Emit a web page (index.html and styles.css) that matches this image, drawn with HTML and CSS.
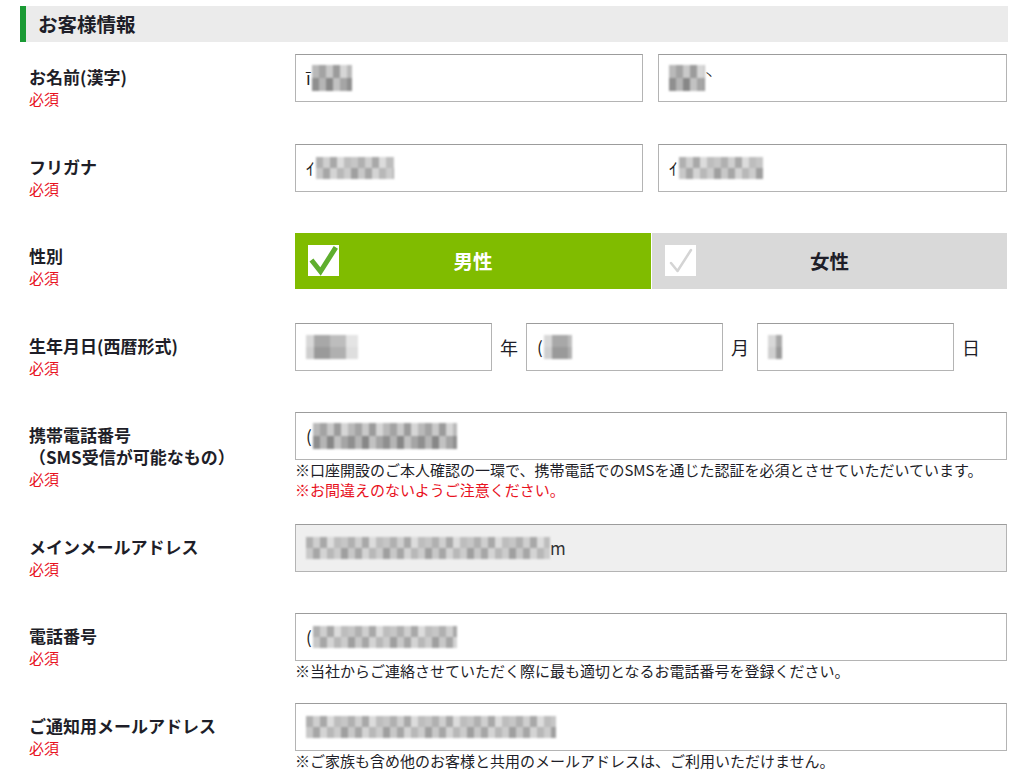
FILE: index.html
```html
<!DOCTYPE html>
<html lang="ja">
<head>
<meta charset="utf-8">
<title>お客様情報</title>
<link rel="stylesheet" href="styles.css">
</head>
<body>
<div class="page">
  <h2 class="section-title">お客様情報</h2>

  <div class="row">
    <div class="label"><div class="name">お名前(漢字)</div><div class="req">必須</div></div>
    <div class="field">
      <div class="pair">
        <div class="input"><span class="lead">ī</span><span class="mosaic w42"></span></div>
        <div class="input"><span class="mosaic w36"></span><span class="tick">丶</span></div>
      </div>
    </div>
  </div>

  <div class="row">
    <div class="label"><div class="name">フリガナ</div><div class="req">必須</div></div>
    <div class="field">
      <div class="pair">
        <div class="input"><span class="lead">ｲ</span><span class="mosaic w78 thin"></span></div>
        <div class="input"><span class="lead">ｲ</span><span class="mosaic w82 thin"></span></div>
      </div>
    </div>
  </div>

  <div class="row">
    <div class="label"><div class="name">性別</div><div class="req">必須</div></div>
    <div class="field">
      <div class="gender">
        <div class="gbtn on">
          <span class="cbox"><svg viewBox="0 0 31 31" width="31" height="31"><path d="M5 17 L12.5 26.5 L26.5 4.5" fill="none" stroke="#5fae2e" stroke-width="5" stroke-linecap="square" stroke-linejoin="miter"/></svg></span>
          <span class="gtext">男性</span>
        </div>
        <div class="gbtn off">
          <span class="cbox"><svg viewBox="0 0 31 31" width="31" height="31"><path d="M6 18 L12.5 26 L26 5" fill="none" stroke="#d4d4d4" stroke-width="2.5" stroke-linecap="round" stroke-linejoin="round"/></svg></span>
          <span class="gtext">女性</span>
        </div>
      </div>
    </div>
  </div>

  <div class="row">
    <div class="label"><div class="name">生年月日(西暦形式)</div><div class="req">必須</div></div>
    <div class="field">
      <div class="birth">
        <div class="input short"><span class="mosaic w52 soft"></span></div><span class="unit">年</span>
        <div class="input short"><span class="lead">(</span><span class="mosaic w28 soft"></span></div><span class="unit">月</span>
        <div class="input short"><span class="mosaic w14 soft"></span></div><span class="unit">日</span>
      </div>
    </div>
  </div>

  <div class="row">
    <div class="label"><div class="name">携帯電話番号</div><div class="name">（SMS受信が可能なもの）</div><div class="req">必須</div></div>
    <div class="field">
      <div class="input"><span class="lead">(</span><span class="mosaic w140"></span></div>
      <div class="notes">
        <p class="note">※口座開設のご本人確認の一環で、携帯電話でのSMSを通じた認証を必須とさせていただいています。</p>
        <p class="note red">※お間違えのないようご注意ください。</p>
      </div>
    </div>
  </div>

  <div class="row">
    <div class="label"><div class="name">メインメールアドレス</div><div class="req">必須</div></div>
    <div class="field">
      <div class="input disabled"><span class="mosaic w240 thin"></span><span class="tail">m</span></div>
    </div>
  </div>

  <div class="row">
    <div class="label"><div class="name">電話番号</div><div class="req">必須</div></div>
    <div class="field">
      <div class="input"><span class="lead">(</span><span class="mosaic w140 thin"></span></div>
      <div class="notes">
        <p class="note">※当社からご連絡させていただく際に最も適切となるお電話番号を登録ください。</p>
      </div>
    </div>
  </div>

  <div class="row">
    <div class="label"><div class="name">ご通知用メールアドレス</div><div class="req">必須</div></div>
    <div class="field">
      <div class="input"><span class="mosaic w250 thin"></span></div>
      <div class="notes">
        <p class="note">※ご家族も含め他のお客様と共用のメールアドレスは、ご利用いただけません。</p>
      </div>
    </div>
  </div>
</div>
</body>
</html>
```

FILE: styles.css
```css
* { box-sizing: border-box; }

html, body {
  margin: 0;
  padding: 0;
  background: #ffffff;
}

body {
  font-family: "Noto Sans CJK JP", "Noto Sans", "Liberation Sans", sans-serif;
  color: #1e1e28;
}

.page {
  width: 1024px;
  padding: 6px 16px 0 20px;
}

.section-title {
  margin: 0 0 12px 0;
  height: 36px;
  line-height: 36px;
  background: #ebebeb;
  border-left: 6px solid #1a9a34;
  padding-left: 12px;
  font-size: 19.5px;
  font-weight: 700;
  color: #1e1e28;
}

.row {
  display: flex;
  margin: 0 0 33.5px 0;
}

.label {
  width: 275px;
  flex: none;
  padding-left: 9px;
  padding-top: 12px;
}

.name {
  font-size: 17px;
  line-height: 22px;
  font-weight: 700;
  white-space: nowrap;
}

.req {
  font-size: 15px;
  line-height: 22px;
  color: #e8121e;
}

.field {
  width: 712px;
  flex: none;
}

.pair {
  display: grid;
  grid-template-columns: 348px 349px;
  gap: 15px;
}

.input {
  height: 48px;
  border: 1px solid #b4b4b4;
  border-top-color: #9c9c9c;
  background: #fff;
  display: flex;
  align-items: center;
  padding-left: 10px;
  font-size: 17px;
  color: #111;
}

.input.disabled {
  background: #efefef;
}

.input.short {
  width: 197px;
}

.lead {
  font-size: 17px;
  line-height: 20px;
  color: #222;
  margin-right: 1px;
}

.tick {
  font-size: 12px;
  margin-left: -2px;
  margin-bottom: 8px;
  color: #222;
}

.tail {
  font-size: 17px;
  color: #333;
}

.mosaic {
  display: inline-block;
  height: 26px;
  background:
    repeating-linear-gradient(90deg, #b9b9b9 0 7px, #a3a3a3 7px 14px, #c9c9c9 14px 21px, #9b9b9b 21px 28px, #d6d6d6 28px 35px) top / 100% 50% no-repeat,
    repeating-linear-gradient(90deg, #8f8f8f 0 7px, #b5b5b5 7px 14px, #878787 14px 21px, #c2c2c2 21px 28px, #a5a5a5 28px 35px) bottom / 100% 50% no-repeat;
  filter: blur(0.8px);
}

.mosaic.thin {
  height: 22px;
  background:
    repeating-linear-gradient(90deg, #b0b0b0 0 7px, #cfcfcf 7px 14px, #a8a8a8 14px 21px, #dcdcdc 21px 28px, #bdbdbd 28px 35px, #c6c6c6 35px 42px) top / 100% 50% no-repeat,
    repeating-linear-gradient(90deg, #c8c8c8 0 7px, #a6a6a6 7px 14px, #d4d4d4 14px 21px, #b8b8b8 21px 28px, #cccccc 28px 35px, #9f9f9f 35px 42px) bottom / 100% 50% no-repeat;
}

.mosaic.soft {
  height: 24px;
  background:
    repeating-linear-gradient(90deg, #d8d8d8 0 8px, #a8a8a8 8px 24px, #bdbdbd 24px 40px, #e4e4e4 40px 52px) top / 100% 50% no-repeat,
    repeating-linear-gradient(90deg, #cfcfcf 0 8px, #9a9a9a 8px 24px, #b0b0b0 24px 40px, #dedede 40px 52px) bottom / 100% 50% no-repeat;
}

.w14 { width: 14px; }
.w28 { width: 28px; }
.w36 { width: 36px; }
.w42 { width: 40px; }
.w52 { width: 52px; }
.w78 { width: 78px; }
.w82 { width: 84px; }
.w140 { width: 144px; }
.w240 { width: 244px; }
.w250 { width: 250px; }

.gender {
  display: grid;
  grid-template-columns: 356px 355px;
  gap: 1px;
  height: 56px;
}

.gbtn {
  position: relative;
  display: flex;
  align-items: center;
  justify-content: center;
  font-size: 19.5px;
  font-weight: 700;
}

.gbtn.on {
  background: #80bc00;
  color: #ffffff;
}

.gbtn.off {
  background: #d9d9d9;
  color: #1e1e28;
}

.cbox {
  position: absolute;
  left: 13px;
  top: 12px;
  width: 31px;
  height: 31px;
  background: #ffffff;
  display: block;
}

.cbox svg { display: block; }

.gtext {
  line-height: 24px;
}

.birth {
  display: flex;
  align-items: center;
}

.unit {
  width: 34px;
  flex: none;
  text-align: center;
  font-size: 18px;
  color: #1e1e28;
}

.notes {
  margin-bottom: -12px;
}

.note {
  margin: 0;
  font-size: 15px;
  line-height: 20px;
  color: #1e1e28;
  white-space: nowrap;
}

.note.red {
  color: #e8121e;
}
```
